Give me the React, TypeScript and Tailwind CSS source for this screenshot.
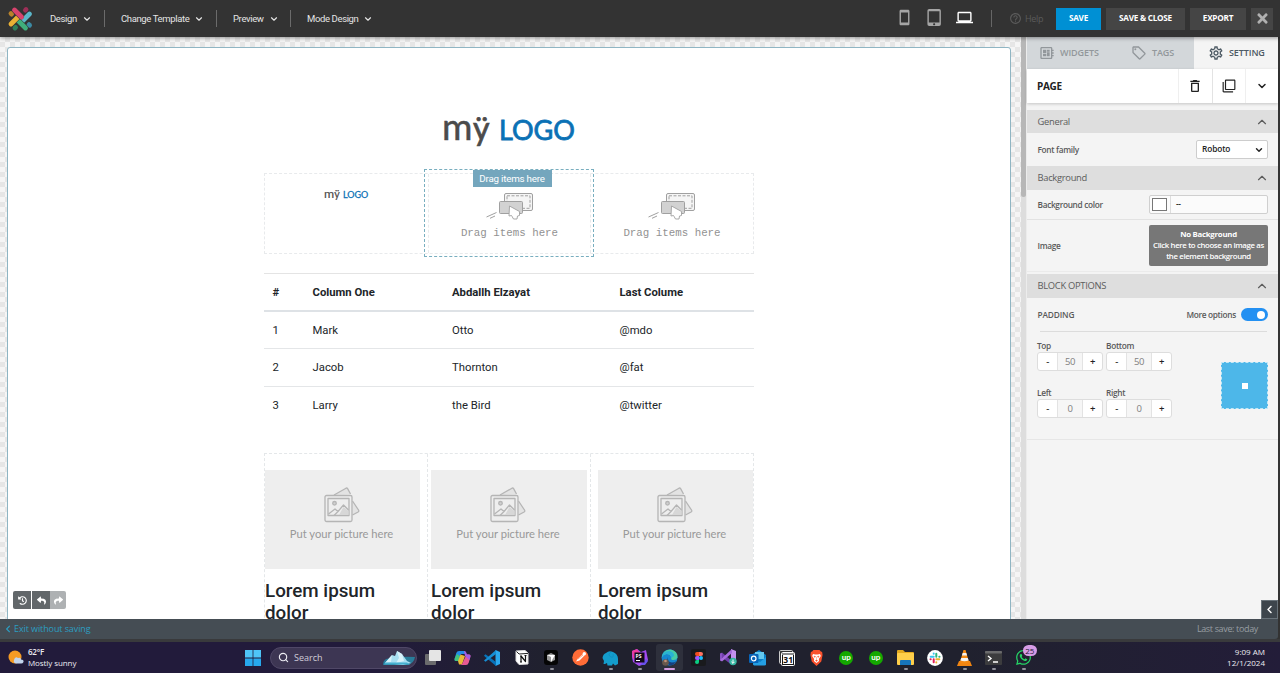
import React from "react";
import {
  MdOutlineDeveloperBoard,
  MdOutlineLocalOffer,
  MdOutlineSettings,
  MdDeleteOutline,
  MdFilterNone,
  MdHelpOutline,
  MdOutlineStayCurrentPortrait,
  MdTabletMac,
  MdLaptop,
} from "react-icons/md";
import { FaReply, FaShare, FaHistory, FaTimes, FaChevronLeft, FaWhatsapp } from "react-icons/fa";
import { ChevronDown, ChevronUp, Search } from "lucide-react";

const roboto = "font-['Roboto',sans-serif]";
const openSans = "font-['Open_Sans',sans-serif]";

function LogoMark() {
  return (
    <svg width="26" height="26" viewBox="0 0 26 26" fill="none" strokeLinecap="round" strokeWidth="4.8">
      <path d="M4 7.5l.6.6" stroke="#b9822b" />
      <path d="M18.4 4.1l.6-.6" stroke="#9c2f57" />
      <path d="M22 18.6l.6.6" stroke="#3c8aa4" />
      <path d="M8 22l.6-.6" stroke="#2f7f5b" />
      <path d="M7.5 4L17 13.5" stroke="#d8436d" />
      <path d="M22.5 8L13.5 17" stroke="#333" strokeWidth="5.8" />
      <path d="M22.5 8L13.5 17" stroke="#5bb6c9" />
      <path d="M18.5 22L9.3 12.7" stroke="#333" strokeWidth="5.8" />
      <path d="M18.5 22L9.3 12.7" stroke="#3fae7c" />
      <path d="M4 18L11.5 10.5" stroke="#333" strokeWidth="5.8" />
      <path d="M4 18L11.5 10.5" stroke="#e9b035" />
      <path d="M7.5 4L14 10.5" stroke="#333" strokeWidth="5.8" />
      <path d="M7.5 4L14.5 11" stroke="#d8436d" />
    </svg>
  );
}

function MenuItem({ label, className, last }: { label: string; className: string; last?: boolean }) {
  return (
    <div className={"flex h-[17px] shrink-0 items-center justify-between text-[9.5px] tracking-[-0.37px] text-[#e4e4e4] " + className}>
      <div className="flex items-center gap-[5px] whitespace-nowrap pt-px">
        <span>{label}</span>
        <ChevronDown size={10} strokeWidth={2.8} />
      </div>
      {!last && <div className="h-[17px] w-px bg-[#6b6b6b]" />}
    </div>
  );
}

function Header() {
  return (
    <header className={"relative z-10 flex h-[37px] shrink-0 items-center bg-[#333333] shadow-[0_1px_4px_rgba(0,0,0,0.4)] " + roboto}>
      <div className="w-[50px] shrink-0 pl-[7px] pt-px"><LogoMark /></div>
      <MenuItem label="Design" className="w-[55px]" />
      <MenuItem label="Change Template" className="w-[112px] pl-4" />
      <MenuItem label="Preview" className="w-[74px] pl-4" />
      <MenuItem label="Mode Design" className="w-[90px] pl-4" last />
      <div className="flex-1" />
      <div className="flex w-[96px] items-center pb-[3px] text-[#a5a5a5]">
        <MdOutlineStayCurrentPortrait size={17} className="ml-[1px]" />
        <MdTabletMac size={17} className="ml-[13px]" />
        <MdLaptop size={17} className="ml-[13px] text-white" />
      </div>
      <div className="h-[17px] w-px bg-[#666]" />
      <div className={"flex w-[64px] items-center gap-[3px] pl-[17px] text-[9px] tracking-[-0.3px] text-[#5b5b5b] " + openSans}>
        <MdHelpOutline size={13} className="shrink-0" />
        <span>Help</span>
      </div>
      <div className={"flex gap-[5px] whitespace-nowrap text-[8.2px] font-bold tracking-[-0.25px] text-white " + openSans}>
        <button className="h-[22px] w-[45px] bg-[#0090d4]">SAVE</button>
        <button className="h-[22px] w-[79px] bg-[#454545]">SAVE &amp; CLOSE</button>
        <button className="h-[22px] w-[56px] bg-[#454545]">EXPORT</button>
        <button className="flex h-[22px] w-[22px] items-center justify-center bg-[#454545] text-[#b0b0b0]"><FaTimes size={15} /></button>
      </div>
      <div className="w-[7px]" />
    </header>
  );
}

function DragArt() {
  return (
    <svg width="50" height="28" viewBox="0 0 50 28" fill="none" stroke="#a0a0a0">
      <rect x="19.5" y=".5" width="28" height="17" rx="1.5" fill="#f5f5f5" />
      <rect x="22" y="2.8" width="23" height="12.5" strokeDasharray="3 1.5" />
      <rect x="14.5" y="8.5" width="23" height="12" rx="1" fill="#d2d2d2" />
      <path d="M24.5 13l-.5 10 2.500-.5 2 3.500h3.500l.5-3 2-.5v-4z" fill="#fff" strokeWidth=".9" />
      <path d="M1.500 24l10-4.500M5 25.300l5-2.300" />
    </svg>
  );
}

function DragPlaceholder() {
  return (
    <div className="flex flex-col items-center pt-[19px]">
      <DragArt />
      <div className="mt-[4px] whitespace-nowrap font-['Liberation_Mono',monospace] text-[10.8px] leading-4 text-[#929292]">Drag items here</div>
    </div>
  );
}

function BrandText({ small }: { small?: boolean }) {
  return (
    <div className={small ? "flex origin-top-left scale-[0.333]" : "flex"}>
      <div className="flex h-[36px] w-[133px] shrink-0 items-baseline whitespace-nowrap font-['Lato',sans-serif] leading-[36px]">
        <span className="w-[31px] text-[37px] text-[#4b4b4b] [-webkit-text-stroke:0.5px_#4b4b4b]">m</span>
        <span className="w-[26px] text-[32px] text-[#4b4b4b] [-webkit-text-stroke:0.7px_#4b4b4b]">ÿ</span>
        <span className="text-[27px] font-normal text-[#0a71b5] [-webkit-text-stroke:0.8px_#0a71b5]">LOGO</span>
      </div>
    </div>
  );
}

function PictureArt() {
  return (
    <svg width="36" height="36" viewBox="0 0 36 36" fill="none" stroke="#b5b5b5" strokeWidth="1.3" strokeLinejoin="round">
      <path d="M10 8L22 1.2q1-.5 1.6.4L26.5 7M28.5 14l6 9q.8 1.2-.4 2L28.5 28" fill="#e3e3e3" />
      <rect x="1" y="8.5" width="27" height="26" rx="1.5" fill="#eee" />
      <rect x="4" y="11.5" width="21" height="17" />
      <circle cx="10.5" cy="16.3" r="1.8" fill="#d0d0d0" />
      <path d="M4.5 27l6.500-5 3 2.500 5.500-6.500 5 5M10 28.500l4-4" />
      <path d="M15 28l4.500-8 5 4v4z" fill="#d7d7d7" stroke="none" />
    </svg>
  );
}

function PictureColumn({ imageClass }: { imageClass: string }) {
  return (
    <div className={"pt-[16px] " + imageClass}>
      <div className="flex h-[99px] flex-col items-center bg-[#eeeeee] pr-[2px] pt-[17px]">
        <PictureArt />
        <div className="mt-[3px] whitespace-nowrap font-['Lato',sans-serif] text-[11.2px] leading-4 text-[#999]">Put your picture here</div>
      </div>
      <h2 className="mt-[11px] whitespace-nowrap text-[18.8px] font-medium leading-[22.4px] text-[#212529]">Lorem ipsum<br />dolor</h2>
    </div>
  );
}

const rows = [
  ["1", "Mark", "Otto", "@mdo"],
  ["2", "Jacob", "Thornton", "@fat"],
  ["3", "Larry", "the Bird", "@twitter"],
];

function Canvas() {
  return (
    <main className="relative flex w-[1021px] shrink-0 overflow-hidden bg-[#f5f5f5] bg-[repeating-conic-gradient(#e6e6e6_0_25%,#f5f5f5_0_50%)] bg-[length:10px_10px] pl-[7px] pt-[10px]">
      <div className={"flex h-[590px] w-[1004px] shrink-0 flex-col rounded-[3px] border border-[#8fb5c3] bg-white pl-[256px] text-[#212529] " + roboto}>
        <div className="h-[125px] shrink-0 pl-[178px] pt-[60px]"><BrandText /></div>
        <div className="relative grid h-[81px] w-[490px] shrink-0 grid-cols-[163px_163px_162px] border border-dashed border-[#e8eaec]">
          <div className="overflow-hidden pl-[59px] pt-[13px]"><BrandText small /></div>
          <div className="border-x border-dashed border-[#e8eaec]"><DragPlaceholder /></div>
          <DragPlaceholder />
          <div className="absolute left-[159px] top-[-5px] flex h-[88px] w-[170px] justify-center border border-dashed border-[#78aebf] pl-[6px]">
            <span className="h-[17px] w-[79px] bg-[#74a6bd] text-center text-[9.8px] leading-[17px] tracking-[-0.22px] text-white">Drag items here</span>
          </div>
        </div>
        <table className="mt-[18.5px] w-[490px] shrink-0 table-fixed text-left text-[11.3px]">
          <colgroup><col className="w-[40px]" /><col className="w-[139.5px]" /><col className="w-[167.5px]" /><col /></colgroup>
          <thead>
            <tr className="h-[38px] border-b-2 border-t border-b-[#dee2e6] border-t-[#e4e4e4]">
              {["#", "Column One", "Abdallh Elzayat", "Last Colume"].map((h) => <th key={h} className="whitespace-nowrap pl-[8.5px] pt-[3px] font-bold">{h}</th>)}
            </tr>
          </thead>
          <tbody>
            {rows.map((r) => (
              <tr key={r[0]} className="h-[37.5px] border-b border-[#e4e6e8] last:border-b-0">
                {r.map((c) => <td key={c} className="whitespace-nowrap pl-[8.5px] pt-[2px]">{c}</td>)}
              </tr>
            ))}
          </tbody>
        </table>
        <div className="mt-[29px] grid h-[200px] w-[490px] shrink-0 grid-cols-[162px_164px_162px] border border-dashed border-[#e4e7e9]">
          <PictureColumn imageClass="mr-[7px]" />
          <div className="border-x border-dashed border-[#e4e7e9]"><PictureColumn imageClass="ml-[3px] mr-[3px]" /></div>
          <PictureColumn imageClass="ml-[7px]" />
        </div>
      </div>
      <div className="absolute bottom-[10px] left-[13px] flex overflow-hidden rounded-[2px] text-white">
        <div className="flex h-[18px] w-[18px] items-center justify-center bg-[#62676a]"><FaHistory size={9} /></div>
        <div className="ml-px flex h-[18px] w-[18px] items-center justify-center bg-[#62676a]"><FaReply size={9} /></div>
        <div className="flex h-[18px] w-[16px] items-center justify-center bg-[#aeb1b3]"><FaShare size={9} /></div>
      </div>
    </main>
  );
}

function SectionBar({ title, className }: { title: string; className: string }) {
  return (
    <div className={"flex shrink-0 items-center justify-between bg-[#dedede] pl-[10.5px] pr-[10px] text-[9.4px] tracking-[-0.3px] text-[#5c5c5c] " + className}>
      <span className="pt-px">{title}</span>
      <ChevronUp size={14} strokeWidth={2} className="-mr-[1px]" />
    </div>
  );
}

function Stepper({ label, value }: { label: string; value: string }) {
  return (
    <div className="w-[66px]">
      <div className="h-[13px] leading-[13px]">{label}</div>
      <div className="flex h-[19px] overflow-hidden rounded-[3px] border border-[#dddddd] bg-white text-center text-[9.5px] leading-[17px]">
        <span className="w-[19px] text-[#333]">-</span>
        <span className="flex-1 border-x border-[#e3e3e3] bg-[#f6f6f6] font-normal text-[#808080]">{value}</span>
        <span className="w-[19px] text-[#222]">+</span>
      </div>
    </div>
  );
}

function SidePanel() {
  return (
    <aside className={"relative flex w-[252px] shrink-0 flex-col border-l border-[#ececec] bg-[#f4f4f4] text-[8.3px] font-semibold tracking-[-0.32px] text-[#5a5a5a] " + openSans}>
      <div className="flex h-[32px] shrink-0 items-center bg-[#d3d7da] text-[9px] font-semibold tracking-[-0.1px] text-[#92979b]">
        <div className="flex w-[92px] items-center gap-[5px] pl-[12px]"><MdOutlineDeveloperBoard size={16} /><span>WIDGETS</span></div>
        <div className="flex w-[75px] items-center gap-[5px] pl-[12px]"><MdOutlineLocalOffer size={16} /><span>TAGS</span></div>
        <div className="flex h-full flex-1 items-center gap-[5px] bg-[#f4f4f4] pl-[14px] text-[#4d5a64]"><MdOutlineSettings size={16} /><span>SETTING</span></div>
      </div>
      <div className="flex h-[34px] shrink-0 items-center bg-white text-[#222] shadow-[0_1px_3px_rgba(0,0,0,0.2)]">
        <div className="w-[151px] pl-[10px] text-[10px] font-bold">PAGE</div>
        <div className="flex h-full w-[34px] items-center justify-center border-l border-[#efefef] pr-[2px]"><MdDeleteOutline size={16} /></div>
        <div className="flex h-full w-[33px] items-center justify-center border-l border-[#e3e3e3] pr-px"><MdFilterNone size={14} /></div>
        <div className="flex h-full w-[33px] items-center justify-center border-l border-[#efefef]"><ChevronDown size={12} strokeWidth={3} /></div>
      </div>
      <SectionBar title="General" className="mt-[7px] h-[23px] font-normal" />
      <div className="flex h-[33px] shrink-0 items-center justify-between pl-[10.5px] pr-[10px]">
        <span className="pt-px">Font family</span>
        <div className="flex h-[19px] w-[72px] items-center justify-between rounded-[2px] border border-[#cdcdcd] bg-white pl-[5px] pr-[3px] tracking-[-0.1px] text-[#222]"><span>Roboto</span><ChevronDown size={10} strokeWidth={3.4} /></div>
      </div>
      <SectionBar title="Background" className="h-[24px] font-normal" />
      <div className="flex h-[30px] shrink-0 items-center justify-between border-b border-[#e2e2e2] pl-[10.5px] pr-[10px]">
        <span className="pt-px">Background color</span>
        <div className="flex h-[19px] w-[119px] items-center rounded-[2px] border border-[#cfcfcf] bg-[#fbfbfb] pl-[2px] text-[#222]">
          <div className="h-[13px] w-[15px] border border-[#777] bg-white" />
          <div className="ml-[3px] h-full w-px bg-[#ddd]" />
          <span className="ml-[5px]">--</span>
        </div>
      </div>
      <div className="flex h-[52px] shrink-0 items-center justify-between border-b border-[#ebebeb] pl-[10.5px] pr-[10px]">
        <span className="pt-px">Image</span>
        <div className="h-[41px] w-[119px] whitespace-nowrap rounded-[2px] bg-[#777777] pt-[4px] text-center text-[7.8px] leading-[11px] tracking-[-0.36px] text-white"><b className="font-bold tracking-[-0.25px]">No Background</b><br />Click here to choose an image as<br />the element background</div>
      </div>
      <SectionBar title="BLOCK OPTIONS" className="mt-[2px] h-[24px] font-normal" />
      <div className="flex h-[33px] shrink-0 items-center pl-[10.5px] pr-[10px]">
        <span className="flex-1 pt-px tracking-[-0.15px]">PADDING</span>
        <span className="mr-[5px] pt-px">More options</span>
        <div className="flex h-[13px] w-[27px] items-center justify-end rounded-full bg-[#2390f2] pr-[3px]"><div className="h-[8px] w-[8px] rounded-full bg-white" /></div>
      </div>
      <div className="ml-[13px] mr-[11px] h-px shrink-0 bg-[#dcdcdc]" />
      <div className="flex h-[108px] shrink-0 justify-between border-b border-[#e6e6e6] pl-[10px] pr-[10px] pt-[7px]">
        <div className="grid h-[94px] grid-cols-[66px_66px] grid-rows-[47px_47px] gap-x-[3px]">
          <Stepper label="Top" value="50" /><Stepper label="Bottom" value="50" />
          <Stepper label="Left" value="0" /><Stepper label="Right" value="0" />
        </div>
        <div className="mt-[23px] flex h-[47px] w-[47px] items-center justify-center border border-dashed border-[#c3e8f7] bg-[#4db7e9]"><div className="h-[6px] w-[6px] bg-white" /></div>
      </div>
      <div className="absolute bottom-0 right-0 flex h-[19px] w-[17px] items-center justify-center border border-[#69737a] bg-[#3d454c] text-white"><FaChevronLeft size={9} /></div>
    </aside>
  );
}

function WindowsIcon() {
  return <svg width="16" height="16" viewBox="0 0 16 16" fill="#4fc4f7"><path d="M0 0h7.6v7.6H0zM8.4 0H16v7.6H8.4z" /><path d="M0 8.4h7.6V16H0zM8.4 8.4H16V16H8.4z" fill="#27a8ed" /></svg>;
}

function Iceberg() {
  return (
    <svg width="33" height="17" viewBox="0 0 33 17">
      <path d="M4 10q12-3 29-2-1 6-7 8H1q0-4 3-6z" fill="#287d9b" />
      <path d="M3 14l7-8 3 1 2-5 5 3 5 7 4 2-8 2z" fill="#a7def1" />
      <path d="M15 2l2 7-3 5 8-2-2-7zM10 6l-1 7-6 1z" fill="#d8f2fa" />
      <path d="M3 13.5h22l3 2H2z" fill="#46b0cf" />
    </svg>
  );
}

function TaskView() {
  return <svg width="16" height="15" viewBox="0 0 16 15"><rect y="4" width="11" height="11" rx="1" fill="#6b6b6d" /><rect x="4" width="12" height="11" rx="1" fill="#e5e5e5" /></svg>;
}

function Copilot() {
  return (
    <svg width="17" height="16" viewBox="0 0 17 16" strokeLinejoin="round">
      <path d="M5 1h6l1 3H7L4.5 11H2Q0 11 .7 8.5L2.3 3Q3 1 5 1z" fill="#238de8" />
      <path d="M.8 8Q0 11 2 11h2.500L6 6 3 4z" fill="#42c47d" />
      <path d="M6.500 4.500L4 11l1 3.500h3L11 6z" fill="#e9ba37" />
      <path d="M12.500 4.500H15q2 0 1.300 2.500l-1.500 5.500Q14 15 12 15H6.500q2-.5 2.500-3z" fill="#e85a93" />
      <path d="M10 1q2 0 2.500 2l.5 1.500h2q2 0 1.300 2.500L15.500 10 11 6z" fill="#a45ee4" />
    </svg>
  );
}

function VsCode() {
  return <svg width="16" height="16" viewBox="0 0 16 16"><path d="M11.5 0L16 2v12l-4.500 2z" fill="#2aa8ee" /><path d="M0 5.500l1.500-1.300L12 12v4L1 6.800z" fill="#0872b8" /><path d="M0 10.500l1.500 1.300L12 4V0L0 10.500z" fill="#168ed5" /></svg>;
}

function NotionIcon() {
  return (
    <svg width="14" height="15" viewBox="0 0 14 15" strokeLinejoin="round">
      <path d="M1 1l9-.5L13 3v11l-9 .5L1 11z" fill="#fff" stroke="#ddd" />
      <path d="M1.5 1.5L4 4l9-.6" fill="none" stroke="#222" />
      <path d="M6 12V6l4.500 5.500v-6M5 6h2M9.500 5.500h2M5 12h2" fill="none" stroke="#111" strokeWidth="1.2" />
    </svg>
  );
}

function CursorIcon() {
  return <svg width="14" height="15" viewBox="0 0 14 15"><rect width="14" height="15" rx="3" fill="#050505" /><path d="M3 5l4-2 4 2v5l-4 2-4-2z" fill="#999" /><path d="M3 5h8l-4 7V7z" fill="#fff" /></svg>;
}

function Postman() {
  return <svg width="17" height="17" viewBox="0 0 17 17"><circle cx="8.5" cy="8.5" r="8.2" fill="#ff6c37" /><path d="M4 12.5l2-3 5-4.500 1.500 1.500-5 5z" fill="#fff" /><circle cx="12.3" cy="4.7" r="1.7" fill="#fff" /><path d="M6 10l5-4" stroke="#ff6c37" strokeWidth=".6" /></svg>;
}

function Elephant() {
  return <svg width="16" height="16" viewBox="0 0 16 16"><path d="M.5 8Q1 4 4 3q3-3 7-1 5 2 5 7v5l-3 1.500-2-2-1 2H5.500L5 13l-2 1H1.500L2 11z" fill="#149dcc" /><path d="M9 2q-4 3 0 5 3 1 2-3" fill="none" stroke="#0f8bbb" strokeWidth=".7" /></svg>;
}

function PhpStorm() {
  return (
    <svg width="17" height="17" viewBox="0 0 17 17">
      <path d="M1 2l5-2 4 3 5-2 2 10-3 4-6 2-6-4-1-5z" fill="#a34bf0" /><path d="M1 2l5-2 3 4-7 6z" fill="#ee3b9e" /><path d="M9 16l6-6 2 2-3 4z" fill="#6951ed" />
      <rect x="3.5" y="3.5" width="10" height="10" fill="#100b18" />
      <text x="4.5" y="9" fontSize="5" fontWeight="700" fill="#fff" fontFamily="Open Sans">PS</text><path d="M5 11.5h4" stroke="#fff" />
    </svg>
  );
}

function Edge() {
  return (
    <svg width="17" height="17" viewBox="0 0 17 17">
      <circle cx="8.5" cy="8.5" r="8" fill="#1687cf" />
      <path d="M1 7Q3 0 10 .5q7 2 6.500 8-1 3-5 2.500-2-.5-1-3Q9 5 5.500 5 2 5.500 1 8z" fill="#47cba5" />
      <path d="M1 7q2-5 8-5 4 1 4 5l-3 2Q10 5 5.500 5 2 5.500 1 8z" fill="#28b2d5" />
      <path d="M7 8q-1 5 4 5.500 3 0 4.500-1.500Q13 17 8 16 5 13 7 8z" fill="#173f7d" />
      <circle cx="4.5" cy="13.5" r="3.3" fill="#68584c" /><circle cx="4.5" cy="12" r="1.3" fill="#c29279" />
    </svg>
  );
}

function Figma() {
  return (
    <div className="flex h-[17px] w-[15px] items-center justify-center rounded-[2px] bg-[#191a1d]">
      <svg width="8" height="12" viewBox="0 0 8 12"><path d="M4 0H2a2 2 0 000 4h2z" fill="#f24e1e" /><path d="M4 0h2a2 2 0 010 4H4z" fill="#ff7262" /><path d="M4 4H2a2 2 0 000 4h2z" fill="#a259ff" /><circle cx="6" cy="6" r="2" fill="#1abcfe" /><path d="M4 8H2a2 2 0 102 2z" fill="#0acf83" /></svg>
    </div>
  );
}

function VisualStudio() {
  return <svg width="17" height="17" viewBox="0 0 17 17"><path d="M11 0l5 2v12l-5 2z" fill="#c491ee" /><path d="M0 5l2-1.500L12 12v4L0 7z" fill="#703ead" /><path d="M0 4.500L2 4v8l-2-.5z" fill="#8a52c4" /><path d="M0 11l2 1.500L12 4V0z" fill="#a76bdc" /><circle cx="13" cy="12.5" r="3.7" fill="#35b6a1" /><path d="M13 10.500v3.700M11.400 12.800l1.600 1.600 1.600-1.600" fill="none" stroke="#fff" /></svg>;
}

function Outlook() {
  return <svg width="17" height="16" viewBox="0 0 17 16"><path d="M4 4l6-4 7 5v10H4z" fill="#087fc8" /><path d="M6 2h9v7H6z" fill="#63c8ee" /><path d="M4 8l7 4 6-5v7q0 1.500-1.500 1.500H5Q4 15 4 13z" fill="#249fe3" /><rect y="4" width="9.5" height="9" rx="1" fill="#0764b8" /><circle cx="4.7" cy="8.5" r="2.3" fill="none" stroke="#fff" strokeWidth="1.2" /></svg>;
}

function CalendarIcon() {
  return <svg width="16" height="16" viewBox="0 0 16 16"><rect x=".6" y=".6" width="13" height="13" rx="1" fill="#222" stroke="#ddd" /><rect x="2.5" y="2.5" width="13" height="13" rx="1" fill="#181818" stroke="#fff" /><path d="M2.5 4h13" stroke="#fff" /><rect x="4" y="5" width="10" height="9" fill="#fff" /><text x="4.3" y="12.8" fontSize="8.5" fontWeight="700" fontFamily="Open Sans" fill="#111">31</text></svg>;
}

function Brave() {
  return <svg width="13" height="16" viewBox="0 0 15 16" preserveAspectRatio="none"><path d="M4 0h7l1.500 1.500L14 2l.5 3L13 11.500 7.500 16 2 11.500.5 5 1 2l1.500-.5z" fill="#f9512c" /><path d="M3.500 4l2.500.5h3l2.500-.5 1 2-2.300 3 .3 2-3 2-3-2 .3-2-2.300-3z" fill="#fff" /><path d="M4.500 6l2 .5-1 1zM10.500 6l-2 .5 1 1zM7.500 7v2.500M6.300 10.500l1.200-.7 1.200.7-1.200 1z" fill="#f9512c" stroke="#f9512c" strokeWidth=".4" /></svg>;
}

function Upwork() {
  return <div className="h-[14px] w-[14px] rounded-full bg-[#14a800] text-center font-['Lato',sans-serif] text-[8px] font-bold leading-[12px] text-white">up</div>;
}

function Folder() {
  return <svg width="17" height="15" viewBox="0 0 17 15"><path d="M0 1q0-1 1-1h5l2 2h8q1 0 1 1v3H0z" fill="#e3a91f" /><rect y="3" width="17" height="12" rx="1" fill="#ffcf4a" /><path d="M3 15v-4q0-1 1-1h9q1 0 1 1v4z" fill="#1675bd" /></svg>;
}

function SlackIcon() {
  return (
    <svg width="16" height="16" viewBox="0 0 16 16" fill="none" strokeLinecap="round" strokeWidth="2">
      <circle cx="8" cy="8" r="7.9" fill="#fff" /><path d="M6.7 3.5v.2M3.7 6.700h3" stroke="#36c5f0" /><path d="M9.3 3.7v3M12.3 6.700h.2" stroke="#2eb67d" /><path d="M9.3 9.300h3M9.300 12.300v.2" stroke="#ecb22e" /><path d="M6.7 9.300v3M3.700 9.300h-.2" stroke="#e01e5a" />
    </svg>
  );
}

function Vlc() {
  return <svg width="15" height="16" viewBox="0 0 15 16"><path d="M2 11h11l2 5H0z" fill="#f18512" /><path d="M6.500 0h2L12 12q-4.500 3-9 0z" fill="#f58a13" /><path d="M5.700 3h3.600l.8 2.500H4.900zM4.200 8h6.600l.8 2.500q-4 1.500-8.200 0z" fill="#f3f3f3" /></svg>;
}

function Terminal() {
  return <svg width="17" height="14" viewBox="0 0 17 14"><rect width="17" height="14" rx="1" fill="#3c3c3e" /><rect width="17" height="2.5" rx="1" fill="#6b6b6d" /><path d="M3 5l3 2.500L3 10M8 11h5" fill="none" stroke="#fff" strokeWidth="1.4" /></svg>;
}

function Taskbar() {
  const apps: { icon: React.ReactNode; dot?: boolean; active?: boolean }[] = [
    { icon: <TaskView /> }, { icon: <Copilot /> }, { icon: <VsCode /> }, { icon: <NotionIcon /> },
    { icon: <CursorIcon />, dot: true }, { icon: <Postman /> }, { icon: <Elephant />, dot: true },
    { icon: <PhpStorm />, dot: true }, { icon: <Edge />, active: true }, { icon: <Figma /> },
    { icon: <VisualStudio /> }, { icon: <Outlook /> }, { icon: <CalendarIcon /> },
    { icon: <Brave /> }, { icon: <Upwork /> }, { icon: <Upwork /> },
    { icon: <Folder />, dot: true }, { icon: <SlackIcon /> }, { icon: <Vlc />, dot: true }, { icon: <Terminal />, dot: true },
    { icon: <div className="relative"><FaWhatsapp size={17} className="text-[#25d366]" /><span className="absolute -right-[5px] -top-[4px] h-[11px] w-[14px] rounded-full bg-[#d69ce6] text-center text-[8px] leading-[11px] text-[#241b34]">25</span></div>, dot: true },
  ];
  return (
    <div className={"flex h-[31px] shrink-0 items-center bg-[linear-gradient(90deg,#221b3b_0%,#221b3b_30%,#20212e_43%,#20212e_75%,#231d39_100%)] text-[8px] text-[#ececf2] " + openSans}>
      <div className="flex w-[245px] items-center gap-[4px] pl-[8px]">
        <svg width="16" height="15" viewBox="0 0 16 15"><circle cx="7" cy="7" r="6.5" fill="#f59b24" /><path d="M6 10q1-4 4-2 3-1 3 1.500 3 0 2.500 2.500-1 2-3 1.500H8q-3-1-2-3.500z" fill="#c3d5ed" /></svg>
        <div className="-mt-[2px] leading-[11px]"><div className="font-semibold tracking-[-0.2px]">62°F</div><div className="whitespace-nowrap tracking-[-0.08px]">Mostly sunny</div></div>
      </div>
      <WindowsIcon />
      <div className="ml-[9px] flex h-[22px] w-[147px] items-center rounded-full border border-[#504867] bg-[#3d3653] pl-[7px] pr-px text-[9px]">
        <Search size={11} strokeWidth={2.5} /><span className="ml-[5px] flex-1 text-[#d0cdd9]">Search</span><Iceberg />
      </div>
      <div className="ml-[1.5px] flex h-full">
        {apps.map((app, i) => (
          <div key={i} className="relative flex h-full w-[29.5px] shrink-0 items-center justify-center">
            {app.active && <div className="absolute left-[1.5px] top-[2px] h-[27px] w-[27px] rounded-[3px] bg-[#2e303c]" />}
            <div className="relative">{app.icon}</div>
            {app.dot && <div className="absolute bottom-[3px] left-[13px] h-[2px] w-[4px] rounded-full bg-[#92929c]" />}
            {app.active && <div className="absolute bottom-[3px] left-[9.5px] h-[2px] w-[11px] rounded-full bg-[#d39be0]" />}
          </div>
        ))}
      </div>
      <div className="-mt-[2px] ml-auto pr-[15px] text-right leading-[11px]">9:09 AM<br />12/1/2024</div>
    </div>
  );
}

export default function App() {
  return (
    <div className="flex h-[673px] w-[1280px] flex-col overflow-hidden bg-[#333]">
      <Header />
      <div className="flex h-[582px] shrink-0">
        <Canvas />
        <div className="w-[5px] shrink-0 bg-[#dddddd]"><div className="h-[160px] rounded-b bg-[#b7b7b7]" /></div>
        <SidePanel />
      </div>
      <footer className={"flex h-[20px] w-[1278px] shrink-0 items-center justify-between rounded-br-[3px] bg-[#454d54] pl-[4px] pr-[20px] text-[9px] text-[#979da2] " + openSans}>
        <div className="flex items-center gap-[2px] tracking-[-0.1px] text-[#2c9dc1]"><FaChevronLeft size={8} /><span>Exit without saving</span></div>
        <span className="tracking-[-0.35px]">Last save: today</span>
      </footer>
      <div className="h-[3px] shrink-0 bg-[#393a3c]" />
      <Taskbar />
    </div>
  );
}
